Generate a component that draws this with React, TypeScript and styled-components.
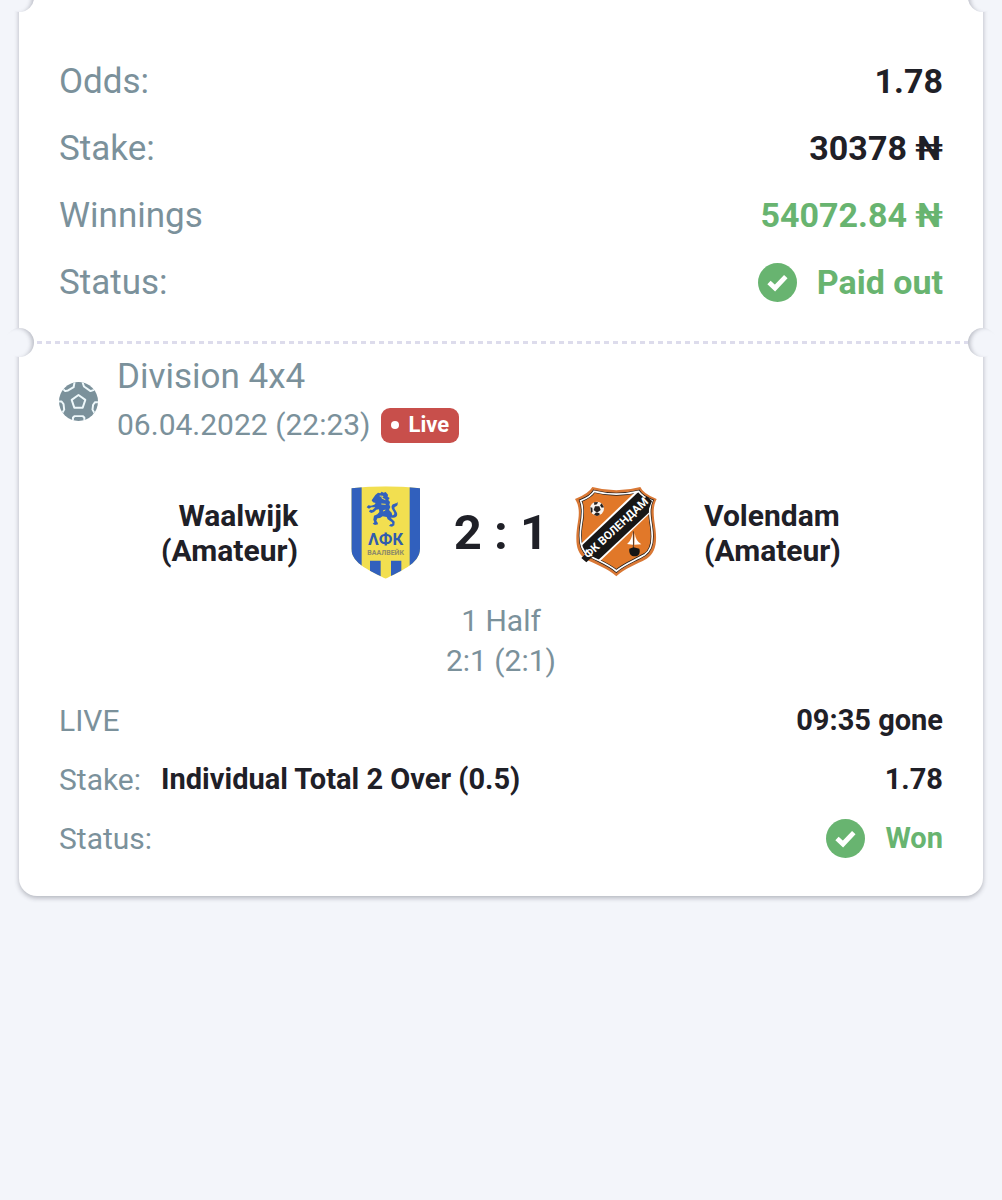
import React from 'react';
import styled, { createGlobalStyle } from 'styled-components';

const color = {
  page: '#f3f5fa',
  card: '#ffffff',
  muted: '#7b919b',
  ink: '#1f2027',
  green: '#68b470',
  red: '#c84f4b',
  dash: '#dddcec',
};

const GlobalStyle = createGlobalStyle`
  *, *::before, *::after { box-sizing: border-box; }
  body {
    margin: 0;
    background: ${color.page};
    color: ${color.ink};
    font-family: Roboto, "Noto Sans", sans-serif;
  }
`;

const Page = styled.main`
  padding: 0 19px 40px;
  overflow: hidden;
`;

const Card = styled.article`
  background: ${color.card};
  border-radius: 0 0 18px 18px;
  box-shadow: 0 2px 5px rgba(40, 44, 60, 0.32);
`;

const Tear = styled.div<{ $line?: boolean }>`
  position: relative;
  height: 3px;
  background: ${(p) =>
    p.$line
      ? `repeating-linear-gradient(90deg, ${color.dash} 0 5px, transparent 5px 9px)`
      : 'none'};

  &::before,
  &::after {
    content: '';
    position: absolute;
    top: ${(p) => (p.$line ? -13 : -17)}px;
    width: 29px;
    height: 29px;
    border-radius: 50%;
    background: ${color.page};
  }
  &::before {
    left: -14px;
    box-shadow: inset -4px 1px 4px -2px rgba(40, 44, 60, 0.28);
  }
  &::after {
    right: -14px;
    box-shadow: inset 4px 1px 4px -2px rgba(40, 44, 60, 0.28);
  }
`;

const Summary = styled.dl`
  margin: 0;
  padding: 45px 40px 25px;
  font-size: 34px;
  line-height: 67px;
`;

const Details = styled.section`
  padding: 9px 40px 28px;
  font-size: 30px;
`;

const Row = styled.div`
  display: flex;
  justify-content: space-between;
  align-items: center;
`;

const Label = styled.dt`
  color: ${color.muted};

  ${Summary} & {
    font-size: 35px;
  }
`;

const Value = styled.dd<{ $good?: boolean }>`
  display: flex;
  align-items: center;
  gap: 20px;
  margin: 0;
  font-weight: 700;
  color: ${(p) => (p.$good ? color.green : color.ink)};
`;

const Pick = styled.dd`
  flex: 1;
  margin: 0 0 0 20px;
  font-weight: 700;
`;

const Legs = styled.dl`
  margin: 0;
  line-height: 59px;

  dd {
    font-size: 29px;
  }
`;

const EventHead = styled.header`
  display: flex;
  align-items: center;
  gap: 19px;
  color: ${color.muted};
  line-height: 48px;
`;

const League = styled.h2`
  margin: 0;
  font-size: 35px;
  font-weight: 400;
`;

const When = styled.div`
  display: flex;
  align-items: center;
  gap: 10px;
`;

const LiveBadge = styled.span`
  display: flex;
  align-items: center;
  gap: 10px;
  height: 35px;
  padding: 0 10px;
  border-radius: 9px;
  background: ${color.red};
  color: #fff;
  font-size: 22px;
  font-weight: 700;

  &::before {
    content: '';
    width: 8px;
    height: 8px;
    border-radius: 50%;
    background: #fff;
  }
`;

const Match = styled.div`
  display: grid;
  grid-template-columns: 1fr 100px 130px 100px 1fr;
  align-items: center;
  justify-items: center;
  height: 96px;
  margin-top: 36px;
`;

const Team = styled.span<{ $side: 'home' | 'away' }>`
  justify-self: ${(p) => (p.$side === 'home' ? 'end' : 'start')};
  padding: 0 38px;
  text-align: ${(p) => (p.$side === 'home' ? 'right' : 'left')};
  font-weight: 700;
  line-height: 35px;
`;

const Score = styled.strong`
  font-size: 49px;
  font-weight: 700;
  line-height: 56px;
  white-space: nowrap;
`;

const Period = styled.p`
  margin: 20px 0 10px;
  text-align: center;
  color: ${color.muted};
  line-height: 40px;
`;

const CheckIcon = () => (
  <svg width="39" height="39" viewBox="0 0 39 39" aria-hidden="true">
    <circle cx="19.5" cy="19.5" r="19.5" fill={color.green} />
    <path d="M11 19.4l6 5.6 10.8-11.4" fill="none" stroke="#fff" strokeWidth="4.8" />
  </svg>
);

const BallIcon = () => (
  <svg width="39" height="39" viewBox="0 0 120 120" aria-hidden="true">
    <clipPath id="ball">
      <circle cx="60" cy="60" r="60" />
    </clipPath>
    <circle cx="60" cy="60" r="60" fill={color.muted} />
    <g clipPath="url(#ball)" fill="none" stroke="#eef8fb" strokeWidth="6" strokeLinejoin="round">
      <path d="M60 40l21 15-8 24H47l-8-24z" />
      <path d="M13 22l6 6 9-2 17-10 3-16M72 0l5 14 20 14 11-4" />
      <path d="M-2 60h10l6 8 2 17-7 12M122 62h-11l-6 8-2 15 7 12" />
      <path d="M43 122v-13l5-4h25l5 4v13" />
    </g>
  </svg>
);

const WaalwijkCrest = () => (
  <svg width="72" height="95" viewBox="48 30 216 285" role="img" aria-label="Waalwijk">
    <clipPath id="waalwijk">
      <path d="M52 37Q103 31 155 31T258 37V218C258 264 194 287 155 308C116 287 52 264 52 218Z" />
    </clipPath>
    <g clipPath="url(#waalwijk)">
      <path d="M48 28h216v285H48z" fill="#f2df50" />
      <path d="M48 28h35v285H48zM227 28h37v285h-37zM108 254h32v59h-32zM171 254h31v59h-31z" fill="#3160bd" />
    </g>
    <path
      d="M124 57l8-7 7 2 4-5 6 3 6-2 7 8-1 6 6 4-4 6 5 6-2 8 3 7-4 9 8 8 2 9-5 6 7 7 5 5-1 11-7 4-9-2 4-5 6-1-1-5-13-9-3-7-12-2-8 5-8 1-3 7 4 6 1 5-9 2-7-4 5-4-3-8 2-12 10-4 6-7-1-8-8 1-7 7-8 3-7-4 3-6 7 1 9-8-12 0-7 4-7-4 5-6 8 1 10-3 4-5-8-2-4-6z"
      fill="#3160bd"
    />
    <path d="M167 116c12 5 17-2 12-9-7-9-9-17-2-22 7-4 11-1 13-8 3 10-1 13-6 15-6 3-1 8 3 15 8 12-3 24-19 16z" fill="#3160bd" />
    <path d="M137 60l10 1-4 5 11 5M142 84l13 1M147 105l7-3" stroke="#f2df50" strokeWidth="3" fill="none" />
    <text x="155" y="206" textAnchor="middle" fontFamily="Roboto, sans-serif" fontSize="50" fontWeight="700" fill="#315cad">
      ΛФК
    </text>
    <text x="155" y="236" textAnchor="middle" fontFamily="Roboto, sans-serif" fontSize="21" fontWeight="700" fill="#8e8b69">
      ВААЛВЕЙК
    </text>
  </svg>
);

const volendamShape =
  'M83 30Q155 50 227 30Q235 50 276 66C263 90 267 118 271 146C279 196 273 228 246 245C215 263 180 273 155 298C130 273 92 263 62 245C35 228 31 196 38 146C43 118 47 90 31 66Q72 50 83 30Z';
const volendamInner =
  'M88 43Q155 60 222 43Q232 59 262 71C251 94 256 120 260 147C267 192 261 220 240 233C211 250 178 262 155 282C132 262 98 250 69 233C48 220 43 192 49 147C54 120 58 94 48 71Q79 59 88 43Z';

const VolendamCrest = () => (
  <svg width="86" height="92" viewBox="25 30 258 276" role="img" aria-label="Volendam">
    <clipPath id="volendam">
      <path d={volendamInner} />
    </clipPath>
    <path d={volendamShape} fill="#d97835" />
    <path d={volendamInner} fill="#e17829" stroke="#1d1a19" strokeWidth="9" />
    <g clipPath="url(#volendam)">
      <path d="M24 224L238 20L298 68L78 280Z" fill="#fff" />
      <path d="M24 232L242 25L294 68L73 275Z" fill="#171616" />
    </g>
    <path d={volendamInner} fill="none" stroke="#fff" strokeWidth="5" />
    <path d="M50 243L72 221L87 236L65 256ZM233 72L246 58L262 72L254 92Z" fill="#171616" />
    <circle cx="97" cy="95" r="21" fill="#f6f3ef" />
    <path
      d="M91 88h13l4 11-11 8-10-8zM88 76l12-1-3 7-8 2zM111 79l7 12-7 1-5-7zM77 91l6 1 1 12-5 4zM88 113l5-6 11 1 1 6-8 3z"
      fill="#25211f"
    />
    <text
      transform="translate(71 246) rotate(-43)"
      fontFamily="Roboto, sans-serif"
      fontSize="34"
      fontWeight="700"
      fill="#fff"
    >
      ФК ВОЛЕНДАМ
    </text>
    <path d="M206 163v51" stroke="#493123" strokeWidth="3" />
    <path d="M204 165C202 184 194 196 187 201L205 203ZM210 168Q213 192 230 202L209 203Z" fill="#fff" />
    <path d="M194 215l13-4 17 4c4 15-3 23-14 23s-18-8-16-23z" fill="#171616" />
  </svg>
);

export default function App() {
  return (
    <>
      <GlobalStyle />
      <Page>
        <Card>
          <Tear />
          <Summary>
            <Row>
              <Label>Odds:</Label>
              <Value>1.78</Value>
            </Row>
            <Row>
              <Label>Stake:</Label>
              <Value>30378 ₦</Value>
            </Row>
            <Row>
              <Label>Winnings</Label>
              <Value $good>54072.84 ₦</Value>
            </Row>
            <Row>
              <Label>Status:</Label>
              <Value $good>
                <CheckIcon />
                Paid out
              </Value>
            </Row>
          </Summary>
          <Tear $line />
          <Details>
            <EventHead>
              <BallIcon />
              <div>
                <League>Division 4x4</League>
                <When>
                  <time dateTime="2022-04-06T22:23">06.04.2022 (22:23)</time>
                  <LiveBadge>Live</LiveBadge>
                </When>
              </div>
            </EventHead>
            <Match>
              <Team $side="home">
                Waalwijk
                <br />
                (Amateur)
              </Team>
              <WaalwijkCrest />
              <Score>2 : 1</Score>
              <VolendamCrest />
              <Team $side="away">
                Volendam
                <br />
                (Amateur)
              </Team>
            </Match>
            <Period>
              1 Half
              <br />
              2:1 (2:1)
            </Period>
            <Legs>
              <Row>
                <Label>LIVE</Label>
                <Value>09:35 gone</Value>
              </Row>
              <Row>
                <Label>Stake:</Label>
                <Pick>Individual Total 2 Over (0.5)</Pick>
                <Value>1.78</Value>
              </Row>
              <Row>
                <Label>Status:</Label>
                <Value $good>
                  <CheckIcon />
                  Won
                </Value>
              </Row>
            </Legs>
          </Details>
        </Card>
      </Page>
    </>
  );
}
